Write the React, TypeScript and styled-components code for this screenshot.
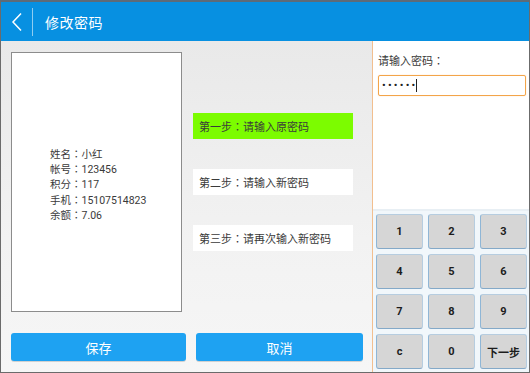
import React from 'react';
import styled, { createGlobalStyle } from 'styled-components';

const GlobalStyle = createGlobalStyle`
  html, body {
    margin: 0;
    padding: 0;
    background: #ffffff;
  }
  body {
    font-family: Roboto, "Noto Sans CJK SC", sans-serif;
  }
`;

const Screen = styled.div`
  width: 530px;
  height: 373px;
  box-sizing: border-box;
  border: 1px solid #6b6b6b;
  border-top: 2px solid #5d6b78;
  display: flex;
  flex-direction: column;
  overflow: hidden;
`;

const Header = styled.header`
  height: 39px;
  flex-shrink: 0;
  background: #0790e1;
  display: flex;
  align-items: center;
  color: #ffffff;
`;

const BackButton = styled.div`
  width: 31px;
  height: 100%;
  display: flex;
  align-items: center;
  justify-content: center;
`;

const Divider = styled.div`
  width: 1px;
  height: 28px;
  background: rgba(255, 255, 255, 0.55);
`;

const Title = styled.h1`
  margin: 0 0 0 12px;
  font-size: 14px;
  font-weight: 400;
  letter-spacing: 0.5px;
`;

const Body = styled.div`
  flex: 1;
  display: flex;
  min-height: 0;
`;

const LeftPane = styled.section`
  width: 371px;
  flex-shrink: 0;
  box-sizing: border-box;
  padding: 11px 0 0 10px;
  background: linear-gradient(180deg, #e9e9e9 0%, #f2f2f2 60%, #f6f6f6 100%);
  display: flex;
  flex-direction: column;
`;

const TopRow = styled.div`
  display: flex;
  gap: 11px;
`;

const InfoCard = styled.div`
  width: 171px;
  height: 260px;
  box-sizing: border-box;
  background: #ffffff;
  border: 1px solid #8c8c8c;
  display: flex;
  align-items: center;
  padding-left: 38px;
`;

const InfoList = styled.div`
  font-size: 10.5px;
  line-height: 14.3px;
  color: #3a3a3a;
  margin-top: 6px;
`;

// full-width colon drawn centred in its cell, as on the device
const Colon = styled.span`
  font-family: "Noto Sans CJK JP", sans-serif;
`;

const Steps = styled.div`
  display: flex;
  flex-direction: column;
  gap: 30px;
  padding-top: 61px;
`;

const Step = styled.div<{ active?: boolean }>`
  width: 160px;
  height: 26px;
  box-sizing: border-box;
  padding-left: 6px;
  display: flex;
  align-items: center;
  font-size: 11px;
  color: #3a3a3a;
  background: ${({ active }) => (active ? '#7cfc00' : '#ffffff')};
`;

const ButtonRow = styled.div`
  display: flex;
  gap: 10px;
  margin-top: 21px;
`;

const ActionButton = styled.button<{ w: number }>`
  width: ${({ w }) => w}px;
  height: 28px;
  border: none;
  border-radius: 3px;
  background: #1ea2f2;
  color: #ffffff;
  font-family: inherit;
  font-size: 13px;
  padding: 0;
  box-shadow: 0 1px 0 rgba(0, 0, 0, 0.15);
`;

const RightPane = styled.aside`
  flex: 1;
  border-left: 1px solid #f2bf8f;
  display: flex;
  flex-direction: column;
  background: #ffffff;
`;

const InputArea = styled.div`
  height: 168px;
  flex-shrink: 0;
  box-sizing: border-box;
  padding: 11px 3px 0 5px;
`;

const Label = styled.div`
  font-size: 11px;
  color: #3a3a3a;
  margin-bottom: 7px;
`;

const PasswordBox = styled.div`
  height: 21px;
  box-sizing: border-box;
  border: 1.5px solid #f3a54a;
  border-radius: 2px;
  box-shadow: 0 0 1px #f8c080;
  display: flex;
  align-items: center;
  padding-left: 3px;
  font-size: 11px;
  letter-spacing: 2.2px;
  color: #222;
`;

const Caret = styled.span`
  display: inline-block;
  width: 1px;
  height: 13px;
  background: #222;
  margin-left: -1px;
`;

const Keypad = styled.div`
  flex: 1;
  border-top: 2px solid #e8eff4;
  background: #f1f7fb;
  box-sizing: border-box;
  padding: 3px 2px 0 3px;
  display: grid;
  grid-template-columns: repeat(3, 1fr);
  grid-template-rows: repeat(4, 35px);
  gap: 5px 5px;
`;

const Key = styled.button`
  border: 1px solid #b6cde0;
  border-left-color: #8fb6d6;
  border-bottom-color: #84a9c8;
  border-radius: 3px;
  background: #d6d6d6;
  color: #1c1c1c;
  font-family: inherit;
  font-size: 11px;
  font-weight: 700;
  padding: 0;
`;

const info = [
  ['姓名', '小红'],
  ['帐号', '123456'],
  ['积分', '117'],
  ['手机', '15107514823'],
  ['余额', '7.06'],
];

const steps = [
  ['第一步', '请输入原密码'],
  ['第二步', '请输入新密码'],
  ['第三步', '请再次输入新密码'],
];

const keys = ['1', '2', '3', '4', '5', '6', '7', '8', '9', 'c', '0', '下一步'];

export default function App() {
  return (
    <>
      <GlobalStyle />
      <Screen>
        <Header>
          <BackButton>
            <svg width="12" height="20" viewBox="0 0 12 20">
              <path d="M10 1.5 L2 10 L10 18.5" fill="none" stroke="#ffffff" strokeWidth="1.5" />
            </svg>
          </BackButton>
          <Divider />
          <Title>修改密码</Title>
        </Header>
        <Body>
          <LeftPane>
            <TopRow>
              <InfoCard>
                <InfoList>
                  {info.map(([k, v]) => (
                    <div key={k}>
                      {k}
                      <Colon>：</Colon>
                      {v}
                    </div>
                  ))}
                </InfoList>
              </InfoCard>
              <Steps>
                {steps.map(([a, b], i) => (
                  <Step key={a} active={i === 0}>
                    {a}
                    <Colon>：</Colon>
                    {b}
                  </Step>
                ))}
              </Steps>
            </TopRow>
            <ButtonRow>
              <ActionButton w={175}>保存</ActionButton>
              <ActionButton w={167}>取消</ActionButton>
            </ButtonRow>
          </LeftPane>
          <RightPane>
            <InputArea>
              <Label>
                请输入密码<Colon>：</Colon>
              </Label>
              <PasswordBox>
                ••••••<Caret />
              </PasswordBox>
            </InputArea>
            <Keypad>
              {keys.map((k) => (
                <Key key={k}>{k}</Key>
              ))}
            </Keypad>
          </RightPane>
        </Body>
      </Screen>
    </>
  );
}
